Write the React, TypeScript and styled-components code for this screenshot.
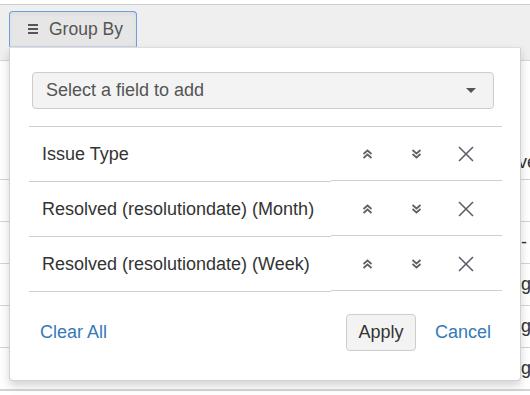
import { createGlobalStyle, styled } from 'styled-components'

const GlobalStyle = createGlobalStyle`
  html, body {
    margin: 0;
    padding: 0;
    background: #fff;
    font-family: 'Liberation Sans', Arial, sans-serif;
    font-size: 18px;
    color: #333;
  }
`

const Page = styled.div`
  padding-top: 4px;
  width: 530px;
  height: 395px;
  overflow: hidden;
`

const Toolbar = styled.div`
  display: flex;
  align-items: flex-start;
  height: 49px;
  padding: 6px 9px 0;
  background: #efefef;
  border-top: 1px solid #cfcfcf;
  border-bottom: 1px solid #d6d6d6;
`

const Anchor = styled.div`
  position: relative;
`

const ToolButton = styled.button`
  display: flex;
  align-items: center;
  gap: 11px;
  height: 36px;
  padding: 0 10px 0 18px;
  width: 128px;
  font: inherit;
  font-size: 17.5px;
  color: #555;
  background: #e6e6e6;
  border: 1px solid #6c9fdb;
  border-bottom-color: #c9d6e6;
  border-radius: 4px 4px 0 0;
  box-shadow: inset 0 2px 4px rgba(0, 0, 0, 0.04);
`

const Bars = styled.span`
  display: flex;
  flex-direction: column;
  gap: 2px;
  width: 10px;

  i {
    display: block;
    height: 2px;
    background: #555;
  }
`

const Popover = styled.div`
  position: absolute;
  top: 100%;
  left: 0;
  z-index: 5;
  box-sizing: border-box;
  width: 512px;
  padding: 24px 18px 29px 19px;
  background: #fff;
  border: 1px solid rgba(0, 0, 0, 0.18);
  border-top-color: #ddd;
  border-radius: 0 0 4px 4px;
  box-shadow: 0 5px 10px rgba(0, 0, 0, 0.17);
`

const FieldSelect = styled.div`
  display: flex;
  align-items: center;
  justify-content: space-between;
  box-sizing: border-box;
  height: 37px;
  margin: 0 8px 17px 3px;
  padding: 0 17px 0 13px;
  background: #f3f3f3;
  border: 1px solid #cdcdcd;
  border-radius: 4px;
  color: #555;
`

const Caret = styled.span`
  width: 0;
  height: 0;
  border-left: 5px solid transparent;
  border-right: 5px solid transparent;
  border-top: 5px solid #555;
`

const FieldTable = styled.div`
  border-top: 1px solid #cfcfcf;
`

const FieldRow = styled.div`
  display: grid;
  grid-template-columns: 302px 1fr;
  height: 55px;
`

const NameCell = styled.div`
  display: flex;
  align-items: center;
  padding-left: 13px;
  color: #333;
  border-bottom: 1px solid #cfcfcf;
  box-sizing: border-box;
  height: 55px;
  padding-top: 1px;
  white-space: nowrap;
`

const ActionCell = styled.div`
  display: grid;
  grid-template-columns: repeat(3, 49px);
  align-items: center;
  justify-items: center;
  padding-left: 12px;
  box-sizing: border-box;
  height: 54px;
  border-bottom: 1px solid #cfcfcf;
`

const IconButton = styled.span`
  display: flex;
  color: #5c6068;
`

const Footer = styled.div`
  display: flex;
  align-items: center;
  padding: 22px 11px 0;
`

const LinkText = styled.a`
  color: #337ab7;
  text-decoration: none;
`

const Spacer = styled.div`
  flex: 1;
`

const ApplyButton = styled.button`
  box-sizing: border-box;
  height: 37px;
  width: 70px;
  margin-right: 19px;
  padding: 0;
  font: inherit;
  color: #333;
  background: #f3f3f3;
  border: 1px solid #cdcdcd;
  border-radius: 4px;
`

const BackTable = styled.div`
  border-bottom: 1px solid #d4d4d4;
`

const HeadRow = styled.div`
  display: grid;
  grid-template-columns: 1fr 12px;
  align-items: end;
  height: 118px;
  border-bottom: 1px solid #d4d4d4;
`

const BackRow = styled.div`
  display: grid;
  grid-template-columns: 1fr 9px;
  align-items: center;
  height: 41px;
  border-bottom: 1px solid #d4d4d4;

  &:first-of-type {
    height: 42px;
  }
`

const EdgeText = styled.span<{ $pad?: number }>`
  overflow: hidden;
  white-space: nowrap;
  padding-bottom: ${p => p.$pad ?? 0}px;
`

const UpIcon = () => (
  <svg width='11' height='10' viewBox='0 0 11 10' fill='none' stroke='currentColor' strokeWidth='1.7'>
    <polyline points='1.5,5 5.5,1.5 9.5,5' />
    <polyline points='1.5,9 5.5,5.5 9.5,9' />
  </svg>
)

const DownIcon = () => (
  <svg width='11' height='10' viewBox='0 0 11 10' fill='none' stroke='currentColor' strokeWidth='1.7'>
    <polyline points='1.5,1 5.5,4.5 9.5,1' />
    <polyline points='1.5,5 5.5,8.5 9.5,5' />
  </svg>
)

const CloseIcon = () => (
  <svg width='16' height='16' viewBox='0 0 16 16' fill='none' stroke='currentColor' strokeWidth='1.6'>
    <line x1='1' y1='1' x2='15' y2='15' />
    <line x1='15' y1='1' x2='1' y2='15' />
  </svg>
)

const fields = [
  'Issue Type',
  'Resolved (resolutiondate) (Month)',
  'Resolved (resolutiondate) (Week)',
]

const edgeCells = ['', '-', 'g', 'g', 'g']

export default function App() {
  return (
    <Page>
      <GlobalStyle />
      <Toolbar>
        <Anchor>
          <ToolButton>
            <Bars>
              <i />
              <i />
              <i />
            </Bars>
            Group By
          </ToolButton>
          <Popover>
            <FieldSelect>
              Select a field to add
              <Caret />
            </FieldSelect>
            <FieldTable>
              {fields.map(f => (
                <FieldRow key={f}>
                  <NameCell>{f}</NameCell>
                  <ActionCell>
                    <IconButton><UpIcon /></IconButton>
                    <IconButton><DownIcon /></IconButton>
                    <IconButton><CloseIcon /></IconButton>
                  </ActionCell>
                </FieldRow>
              ))}
            </FieldTable>
            <Footer>
              <LinkText href='#'>Clear All</LinkText>
              <Spacer />
              <ApplyButton>Apply</ApplyButton>
              <LinkText href='#'>Cancel</LinkText>
            </Footer>
          </Popover>
        </Anchor>
      </Toolbar>
      <BackTable>
        <HeadRow>
          <span />
          <EdgeText $pad={6}>ve</EdgeText>
        </HeadRow>
        {edgeCells.map((c, i) => (
          <BackRow key={i}>
            <span />
            <EdgeText>{c}</EdgeText>
          </BackRow>
        ))}
      </BackTable>
    </Page>
  )
}
